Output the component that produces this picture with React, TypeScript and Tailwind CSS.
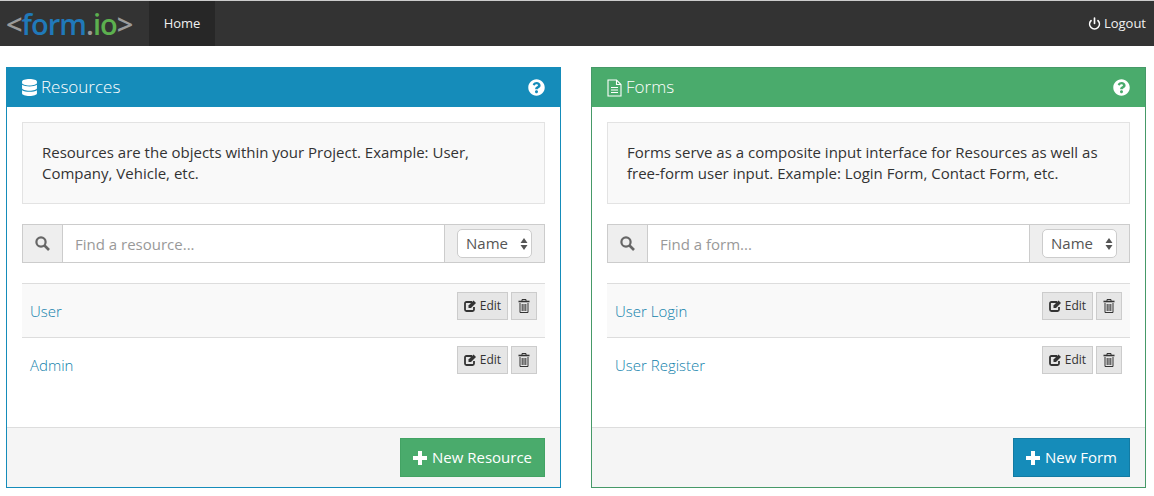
import { FaDatabase, FaQuestionCircle } from "react-icons/fa";
import { Power } from "lucide-react";

type Item = string;

function EditIcon() {
  return (
    <svg width="13" height="12" viewBox="0 0 13 12" fill="none">
      <path d="M8 2 H2.5 Q1 2 1 3.5 V9.5 Q1 11 2.5 11 H8.5 Q10 11 10 9.5 V7" stroke="#333333" strokeWidth="1.8" />
      <path d="M4.5 5.5 L9.5 0.6 L12 3 L7 8 H4.5 Z" fill="#333333" />
    </svg>
  );
}

function TrashIcon() {
  return (
    <svg width="12" height="14" viewBox="0 0 12 14" fill="none" stroke="#333333">
      <path d="M4 2 V0.5 H8 V2" strokeWidth="1" />
      <path d="M0.5 2.5 H11.5" strokeWidth="1.6" />
      <path d="M2 4 V13.5 H10 V4" strokeWidth="1" />
      <path d="M4.2 5 V12 M6 5 V12 M7.8 5 V12" strokeWidth="1" />
    </svg>
  );
}

function SearchIcon() {
  return (
    <svg width="15" height="15" viewBox="0 0 15 15" fill="none" stroke="#666666">
      <circle cx="6" cy="6" r="4.6" strokeWidth="2.2" />
      <path d="M9.5 9.5 L14 14" strokeWidth="2.6" />
    </svg>
  );
}

function PlusIcon() {
  return (
    <svg width="14" height="14" viewBox="0 0 14 14" fill="white">
      <path d="M5 0 H9 V5 H14 V9 H9 V14 H5 V9 H0 V5 H5 Z" />
    </svg>
  );
}

function FileIcon() {
  return (
    <svg width="15" height="18" viewBox="0 0 15 18" fill="none" stroke="white">
      <path d="M1 1 H9.5 L14 5.5 V17 H1 Z" strokeWidth="1.1" />
      <path d="M9.5 1 V5.5 H14" strokeWidth="1.1" />
      <path d="M4 8.5 H11 M4 11 H11 M4 13.5 H11" strokeWidth="1.1" />
    </svg>
  );
}

function Row({ name, striped }: { name: Item; striped: boolean }) {
  return (
    <div className={`flex h-[54px] items-start justify-between border-t border-[#dddddd] pl-2 pr-2 pt-2 ${striped ? "bg-[#f9f9f9]" : "bg-white"}`}>
      <a className="mt-[9px] text-[15px] leading-[20px] font-light text-[#0f7fab]">{name}</a>
      <div className="flex gap-[3px]">
        <button className="flex h-[28px] w-[51px] items-center justify-center gap-[3px] border border-[#cccccc] bg-[#e6e6e6] text-[12px] text-[#333333]">
          <EditIcon />
          Edit
        </button>
        <button className="flex h-[28px] w-[26px] items-center justify-center border border-[#cccccc] bg-[#e6e6e6]">
          <TrashIcon />
        </button>
      </div>
    </div>
  );
}

function Panel({
  title,
  icon,
  accent,
  border,
  description,
  placeholder,
  items,
  action,
  actionClass,
}: {
  title: string;
  icon: React.ReactNode;
  accent: string;
  border: string;
  description: React.ReactNode;
  placeholder: string;
  items: Item[];
  action: string;
  actionClass: string;
}) {
  return (
    <section className={`flex h-[421px] w-[555px] flex-col border ${border}`}>
      <header className={`flex h-[39px] shrink-0 items-center justify-between pl-[15px] pr-[15px] text-white ${accent}`}>
        <div className="flex items-center gap-[4px] text-[17px] font-light">
          {icon}
          <span className="mb-[2px]">{title}</span>
        </div>
        <FaQuestionCircle className="h-[17px] w-[17px]" />
      </header>
      <div className="flex-1 px-[15px] pt-[15px]">
        <div className="h-[82px] border border-[#e3e3e3] bg-[#f9f9f9] px-[19px] pt-[19px] text-[15px] leading-[21px] text-[#333333]">
          {description}
        </div>
        <div className="mt-[20px] flex h-[39px] border border-[#cccccc] bg-white">
          <div className="flex w-[40px] items-center justify-center border-r border-[#cccccc] bg-[#eeeeee]">
            <SearchIcon />
          </div>
          <div className="flex flex-1 items-center pl-[12px] pt-[1px] text-[15px] text-[#999999]">{placeholder}</div>
          <div className="flex w-[100px] items-center justify-start border-l border-[#cccccc] bg-[#eeeeee] pl-[12px]">
            <div className="flex h-[29px] w-[75px] items-center justify-between rounded-[5px] border border-[#cccccc] bg-white pl-[8px] pr-[3px] text-[15px] text-[#555555]">
              Name
              <svg width="8" height="14" viewBox="0 0 8 14" fill="#555555">
                <path d="M4 1 L7.5 6 H0.5 Z M0.5 8 H7.5 L4 13 Z" />
              </svg>
            </div>
          </div>
        </div>
        <div className="mt-[20px]">
          {items.map((name, i) => (
            <Row key={name} name={name} striped={i === 0} />
          ))}
        </div>
      </div>
      <footer className="flex h-[60px] shrink-0 items-start justify-end border-t border-[#dddddd] bg-[#f5f5f5] px-[15px] pt-[10px]">
        <button className={`flex h-[39px] items-center gap-[5px] px-[12px] text-[15px] text-white ${actionClass}`}>
          <PlusIcon />
          {action}
        </button>
      </footer>
    </section>
  );
}

export default function App() {
  return (
    <div className="h-[496px] w-[1154px] overflow-hidden bg-white font-['Open_Sans',sans-serif]">
      <div className="h-px bg-[#cccccc]" />
      <nav className="flex h-[45px] items-stretch justify-between bg-[#333333] text-[#f0f0f0]">
        <div className="flex items-stretch">
          <div className="flex w-[149px] items-center pl-[6px] text-[29px] leading-none font-semibold tracking-[-1px]">
            <span className="text-[#9a9a9a]">&lt;</span>
            <span className="text-[#2079b9]">form</span>
            <span className="text-[#9a9a9a]">.</span>
            <span className="text-[#5cb04f]">io</span>
            <span className="text-[#9a9a9a]">&gt;</span>
          </div>
          <a className="flex w-[66px] items-center justify-center bg-[#272727] text-[13px]">Home</a>
        </div>
        <div className="flex items-center gap-[3px] pr-[8px] text-[13px]">
          <Power className="h-[13px] w-[13px] text-white" strokeWidth={3} />
          Logout
        </div>
      </nav>
      <main className="flex justify-between px-[6px] pr-[8px] pt-[21px]">
        <Panel
          title="Resources"
          icon={<FaDatabase className="h-[17px] w-[15px]" />}
          accent="bg-[#158cba]"
          border="border-[#158cba]"
          description={<>Resources are the objects within your Project. Example: User,<br />Company, Vehicle, etc.</>}
          placeholder="Find a resource..."
          items={["User", "Admin"]}
          action="New Resource"
          actionClass="bg-[#4aab6c] border border-[#43a364]"
        />
        <Panel
          title="Forms"
          icon={<FileIcon />}
          accent="bg-[#4aab6c]"
          border="border-[#469968]"
          description={<>Forms serve as a composite input interface for Resources as well as<br />free-form user input. Example: Login Form, Contact Form, etc.</>}
          placeholder="Find a form..."
          items={["User Login", "User Register"]}
          action="New Form"
          actionClass="bg-[#158cba] border border-[#127ba3]"
        />
      </main>
    </div>
  );
}
